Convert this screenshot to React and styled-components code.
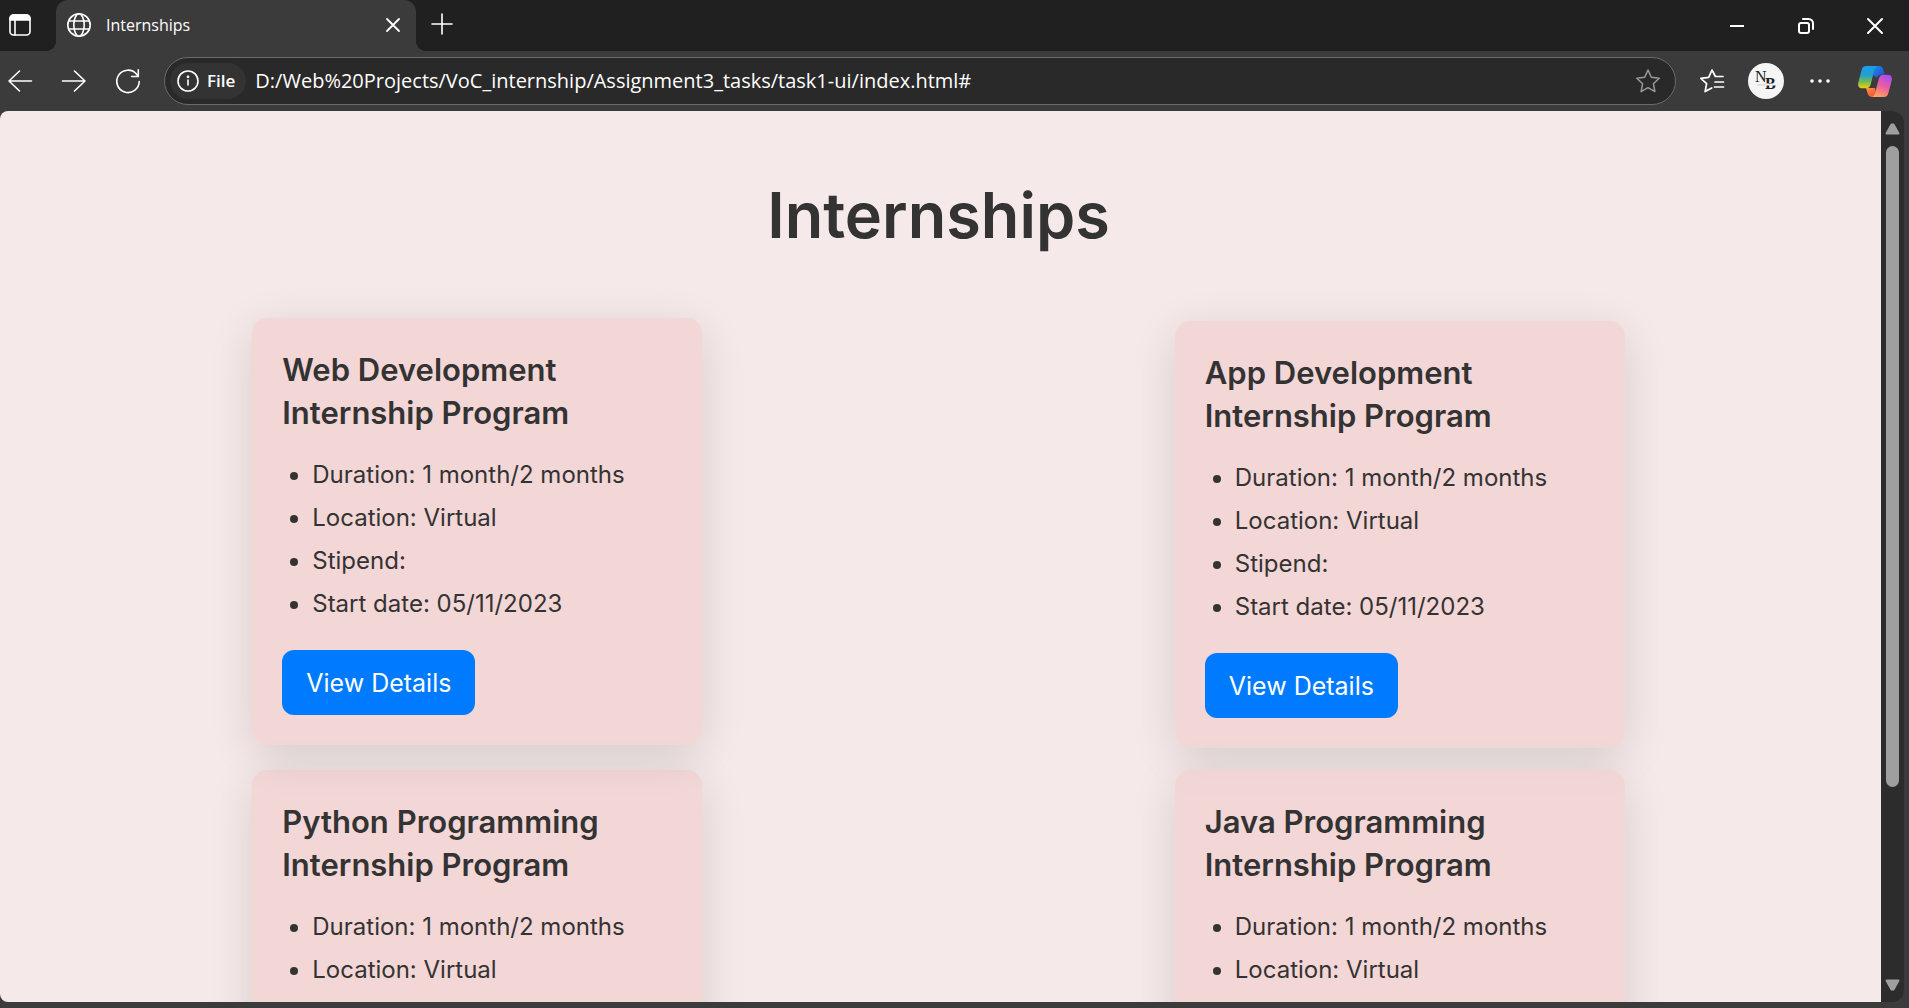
import React from 'react';
import styled, { createGlobalStyle } from 'styled-components';

const UI_FONT = '"Open Sans", "Noto Sans", sans-serif';
const PAGE_FONT = 'Inter, "Open Sans", sans-serif';

const GlobalStyle = createGlobalStyle`
  *, *::before, *::after { box-sizing: border-box; }
  body { margin: 0; background: #3b3b3b; }
  button { font: inherit; }
`;

const Window = styled.div`
  display: flex;
  flex-direction: column;
  height: 100vh;
  overflow: hidden;
  background: #3b3b3b;
  color: #fff;
  font-family: ${UI_FONT};
`;

const TitleBar = styled.header`
  display: flex;
  align-items: stretch;
  height: 51px;
  background: #202020;
`;

const IconButton = styled.button`
  display: flex;
  align-items: center;
  justify-content: center;
  flex: none;
  width: ${(p) => p.$width || 24}px;
  height: ${(p) => p.$height || 36}px;
  padding: 0;
  border: 0;
  background: transparent;
  color: ${(p) => p.$color || '#fff'};
  cursor: pointer;

  svg {
    display: block;
    overflow: visible;
  }
`;

const TabActions = styled.div`
  display: flex;
  align-items: center;
  justify-content: center;
  width: 40px;
  margin-right: 16px;
  padding-bottom: 2px;
`;

const Tab = styled.div`
  position: relative;
  display: flex;
  align-items: center;
  gap: 15px;
  width: 360px;
  padding: 0 11px 2px;
  border-radius: 12px 12px 0 0;
  background: #3b3b3b;
  font-size: 16px;
  line-height: 24px;

  &::before,
  &::after {
    content: '';
    position: absolute;
    bottom: 0;
    width: 10px;
    height: 10px;
  }
  &::before {
    right: 100%;
    background: radial-gradient(circle at 0 0, #202020 10px, #3b3b3b 10px);
  }
  &::after {
    left: 100%;
    background: radial-gradient(circle at 100% 0, #202020 10px, #3b3b3b 10px);
  }
`;

const TabTitle = styled.span`
  flex: 1;
`;

const NewTab = styled.div`
  display: flex;
  align-items: center;
  margin-left: 14px;
  padding-bottom: 4px;
`;

const WindowControls = styled.div`
  display: flex;
  align-items: center;
  margin-left: auto;
`;

const Toolbar = styled.nav`
  display: flex;
  align-items: center;
  gap: 24px;
  height: 60px;
  padding: 0 15px 0 8px;
`;

const NavButtons = styled.div`
  display: flex;
  gap: 30px;
`;

const AddressBar = styled.form`
  display: flex;
  align-items: center;
  flex: 1;
  height: 48px;
  padding: 0 15px 0 5px;
  border: 1px solid #6a6a6a;
  border-radius: 24px;
  background: #292929;
`;

const SiteInfo = styled.button`
  display: flex;
  align-items: center;
  gap: 8px;
  height: 36px;
  padding: 0 11px 0 7px;
  border: 0;
  border-radius: 18px;
  background: #333;
  color: #fff;
  font-size: 17px;
  font-weight: 600;
  line-height: 24px;
  cursor: pointer;
`;

const Url = styled.input`
  flex: 1;
  min-width: 0;
  margin-left: 9px;
  padding: 0;
  border: 0;
  outline: 0;
  background: transparent;
  color: #fff;
  font-family: ${UI_FONT};
  font-size: 20px;
  line-height: 28px;
`;

const Viewport = styled.div`
  display: flex;
  flex: 1;
  min-height: 0;
  margin: 0 5px 6px 0;
  border-radius: 8px 12px 12px 8px;
  overflow: hidden;
`;

const Page = styled.main`
  flex: 1;
  overflow: hidden;
  padding: 50px 20px 0 16px;
  background: #f5e9e9;
  color: #333;
  font-family: ${PAGE_FONT};
`;

const Scrollbar = styled.div`
  display: flex;
  flex-direction: column;
  align-items: center;
  width: 23px;
  padding: 12px 0 11px;
  background: #2c2c2c;
`;

const ScrollTrack = styled.div`
  flex: 1;
  width: 13px;
  padding: 11px 0;
`;

const ScrollThumb = styled.div`
  height: 78%;
  border-radius: 7px;
  background: #9f9f9f;
`;

const PageTitle = styled.h1`
  margin: 0 0 52px;
  font-size: 63px;
  font-weight: 600;
  line-height: 108px;
  text-align: center;
`;

const CardRow = styled.section`
  display: flex;
  justify-content: space-around;
  margin-bottom: 22px;
`;

const Card = styled.article`
  width: 450px;
  padding: 30px;
  border-radius: 15px;
  background: rgba(242, 207, 207, 0.75);
  box-shadow: 0 10px 45px rgba(0, 0, 0, 0.12);
  transform: ${(p) => (p.$raised ? 'translateY(-3px)' : 'none')};
`;

const CardTitle = styled.h2`
  margin: 0 0 19px;
  font-size: 31px;
  font-weight: 600;
  line-height: 43px;
`;

const Details = styled.ul`
  margin: 0 0 25px;
  padding-left: 30px;
  font-size: 24px;
  line-height: 43px;
`;

const DetailsLink = styled.a`
  display: inline-flex;
  align-items: center;
  height: 65px;
  padding: 0 24px;
  border-radius: 12px;
  background: #007bff;
  color: #fff;
  font-size: 25px;
  text-decoration: none;
  vertical-align: top;
`;

const Line = ({ size = 24, width = 1.6, children, ...rest }) => (
  <svg
    width={size}
    height={size}
    viewBox={`0 0 ${size} ${size}`}
    fill="none"
    stroke="currentColor"
    strokeWidth={width}
    strokeLinecap="round"
    strokeLinejoin="round"
    aria-hidden="true"
    {...rest}
  >
    {children}
  </svg>
);

const TabActionsIcon = () => (
  <Line size={22}>
    <rect x="1" y="1" width="20" height="20" rx="3.5" />
    <path d="M1 4.5A3.5 3.5 0 0 1 4.500 1h13A3.500 3.500 0 0 1 21 4.500V6H1z" fill="currentColor" />
    <path d="M6 6v15" />
  </Line>
);

const GlobeIcon = () => (
  <Line>
    <circle cx="12" cy="12" r="11.200" />
    <ellipse cx="12" cy="12" rx="5.200" ry="11.200" />
    <path d="M1.800 8h20.400M1.800 16h20.400" />
  </Line>
);

const CloseIcon = ({ size, width }) => (
  <Line size={size} width={width}>
    <path d={`M1 1L${size - 1} ${size - 1}M${size - 1} 1L1 ${size - 1}`} />
  </Line>
);

const PlusIcon = () => (
  <Line size={22}>
    <path d="M11 1v20M1 11h20" />
  </Line>
);

const ArrowIcon = ({ flip }) => (
  <Line>
    <g transform={flip ? 'translate(24 0) scale(-1 1)' : undefined}>
      <path d="M23.500 12H1M11.500 2L1 12l10.500 10" />
    </g>
  </Line>
);

const ReloadIcon = () => (
  <Line>
    <path d="M23.200 12.500A11.200 11.200 0 1 1 20.600 5.200L22.300 7.300M22.300 0.800v6.700h-6.700" />
  </Line>
);

const InfoIcon = () => (
  <Line size={22}>
    <circle cx="11" cy="11" r="10" />
    <path d="M11 10v5" />
    <circle cx="11" cy="6.800" r="0.600" fill="currentColor" />
  </Line>
);

const StarIcon = () => (
  <Line width={1.5}>
    <path d="M12 1l3.300 7.300 7.900 1-5.800 5.400 1.500 7.900L12 18.700l-6.900 3.900 1.500-7.900L.8 9.300l7.900-1z" />
  </Line>
);

const FavoritesIcon = () => (
  <Line width={1.7}>
    <path d="M23 7.500h-7.600L12 1 8.700 8.300l-7.900 1 5.800 5.400-1.500 7.900 6.600-3.700M15 13h8.500M14.500 18h9" />
  </Line>
);

const AvatarIcon = () => (
  <svg width="36" height="36" viewBox="0 0 36 36" aria-hidden="true">
    <circle cx="18" cy="18" r="18" fill="#f5f5f5" />
    <g fill="#222" fontFamily='"Liberation Serif", serif'>
      <text x="7" y="19" fontSize="16">N</text>
      <text x="17" y="26" fontSize="16" fontWeight="700">B</text>
    </g>
    <path d="M7 21.500h20" stroke="#f5f5f5" strokeWidth="2" />
    <path d="M9 22h9" stroke="#aaa" strokeWidth="0.500" />
  </svg>
);

const DotsIcon = () => (
  <svg width="24" height="24" viewBox="0 0 24 24" fill="currentColor" aria-hidden="true">
    <circle cx="4" cy="12" r="1.800" />
    <circle cx="12" cy="12" r="1.800" />
    <circle cx="20" cy="12" r="1.800" />
  </svg>
);

const CopilotIcon = () => (
  <svg width="34" height="31" viewBox="0 0 34 31" aria-hidden="true">
    <defs>
      <linearGradient id="cpLeft" x1="0" y1="0" x2="0" y2="1">
        <stop offset="0" stopColor="#1b9cf0" />
        <stop offset="0.400" stopColor="#229fd0" />
        <stop offset="0.700" stopColor="#6fbb55" />
        <stop offset="1" stopColor="#f5cf10" />
      </linearGradient>
      <linearGradient id="cpTop" x1="0" y1="0" x2="1" y2="1">
        <stop offset="0" stopColor="#1d8cf0" />
        <stop offset="1" stopColor="#2149c8" />
      </linearGradient>
      <linearGradient id="cpRight" x1="0.700" y1="0" x2="0.300" y2="1">
        <stop offset="0" stopColor="#a64ef0" />
        <stop offset="0.500" stopColor="#ee5da0" />
        <stop offset="1" stopColor="#ffa552" />
      </linearGradient>
      <linearGradient id="cpBottom" x1="0" y1="0" x2="1" y2="1">
        <stop offset="0" stopColor="#ff9a3c" />
        <stop offset="1" stopColor="#ee3f3f" />
      </linearGradient>
    </defs>
    <path d="M17 0h4c2.500 0 3.700 1.500 4.400 4l1.300 4.500h-3c-2.500 0-4 1.200-4.700 3.500L15 9z" fill="url(#cpTop)" />
    <path d="M8 22h9l2 9h-5c-2.500 0-3.800-1.500-4.500-4z" fill="url(#cpBottom)" />
    <path d="M8 0h12c-2 .5-3 2-3.700 4.300l-3.500 13.700c-.8 2.800-2 4.300-5 4.300H4C.5 22.300-.3 19.500.3 16.500L3.600 4C4.300 1.300 5.500 0 8 0z" fill="url(#cpLeft)" />
    <path d="M26 31H13.500c2-.3 3-2 3.700-4.300l3.500-13.700c.8-2.800 2-4.300 5-4.300h4.300c3.500 0 4.300 2.800 3.700 5.800l-3.300 12.500C29.700 29.700 28.500 31 26 31z" fill="url(#cpRight)" />
  </svg>
);

const TriangleIcon = ({ down }) => (
  <svg width="15" height="12" viewBox="0 0 15 12" aria-hidden="true">
    <path
      d={down ? 'M1.500 1.500h12L8.500 10.500h-2z' : 'M1.500 10.500h12L8.500 1.500h-2z'}
      fill="#9f9f9f"
      stroke="#9f9f9f"
      strokeWidth="2"
      strokeLinejoin="round"
    />
  </svg>
);

const MinimizeIcon = () => (
  <Line size={16} width={2}>
    <path d="M1 8h14" strokeLinecap="butt" />
  </Line>
);

const RestoreIcon = () => (
  <Line size={16} width={2}>
    <rect x="1" y="5" width="10" height="10" rx="2" />
    <path d="M5 1h5.500A4.500 4.500 0 0 1 15 5.500V11" />
  </Line>
);

const DETAILS = [
  'Duration: 1 month/2 months',
  'Location: Virtual',
  'Stipend:',
  'Start date: 05/11/2023',
];

const ROWS = [
  [{ subject: 'Web Development', raised: true }, { subject: 'App Development' }],
  [{ subject: 'Python Programming' }, { subject: 'Java Programming' }],
];

const InternshipCard = ({ subject, raised }) => (
  <Card $raised={raised}>
    <CardTitle>
      {subject}
      <br />
      Internship Program
    </CardTitle>
    <Details>
      {DETAILS.map((item) => (
        <li key={item}>{item}</li>
      ))}
    </Details>
    <DetailsLink href="#">View Details</DetailsLink>
  </Card>
);

export default function App() {
  return (
    <Window>
      <GlobalStyle />
      <TitleBar>
        <TabActions>
          <IconButton aria-label="Tab actions menu"><TabActionsIcon /></IconButton>
        </TabActions>
        <Tab>
          <GlobeIcon />
          <TabTitle>Internships</TabTitle>
          <IconButton aria-label="Close tab"><CloseIcon size={14} width={1.8} /></IconButton>
        </Tab>
        <NewTab>
          <IconButton aria-label="New tab"><PlusIcon /></IconButton>
        </NewTab>
        <WindowControls>
          <IconButton $width={69} aria-label="Minimize"><MinimizeIcon /></IconButton>
          <IconButton $width={69} aria-label="Restore"><RestoreIcon /></IconButton>
          <IconButton $width={69} aria-label="Close"><CloseIcon size={16} width={2} /></IconButton>
        </WindowControls>
      </TitleBar>
      <Toolbar>
        <NavButtons>
          <IconButton aria-label="Back"><ArrowIcon /></IconButton>
          <IconButton aria-label="Forward"><ArrowIcon flip /></IconButton>
          <IconButton aria-label="Refresh"><ReloadIcon /></IconButton>
        </NavButtons>
        <AddressBar onSubmit={(e) => e.preventDefault()}>
          <SiteInfo type="button">
            <InfoIcon />
            File
          </SiteInfo>
          <Url
            type="text"
            aria-label="Address"
            defaultValue="D:/Web%20Projects/VoC_internship/Assignment3_tasks/task1-ui/index.html#"
          />
          <IconButton type="button" $color="#9a9a9a" aria-label="Add to favorites"><StarIcon /></IconButton>
        </AddressBar>
        <IconButton aria-label="Favorites"><FavoritesIcon /></IconButton>
        <IconButton $width={36} aria-label="Profile"><AvatarIcon /></IconButton>
        <IconButton aria-label="Settings and more"><DotsIcon /></IconButton>
        <IconButton $width={38} aria-label="Copilot"><CopilotIcon /></IconButton>
      </Toolbar>
      <Viewport>
        <Page>
          <PageTitle>Internships</PageTitle>
          {ROWS.map((row) => (
            <CardRow key={row[0].subject}>
              {row.map((card) => (
                <InternshipCard key={card.subject} {...card} />
              ))}
            </CardRow>
          ))}
        </Page>
        <Scrollbar>
          <TriangleIcon />
          <ScrollTrack>
            <ScrollThumb />
          </ScrollTrack>
          <TriangleIcon down />
        </Scrollbar>
      </Viewport>
    </Window>
  );
}
